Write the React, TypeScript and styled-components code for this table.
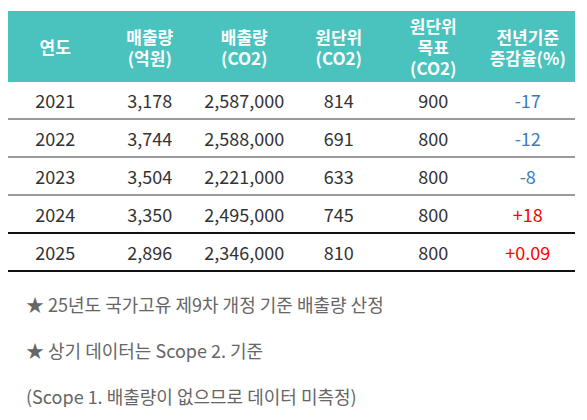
import React from 'react';
import styled, { createGlobalStyle } from 'styled-components';

const GlobalStyle = createGlobalStyle`
  body {
    margin: 0;
    background: #fff;
    font-family: 'Noto Sans CJK KR', 'Noto Sans', sans-serif;
  }
`;

const Wrapper = styled.main`
  padding: 11px 12px 0 8px;
`;

const Table = styled.table`
  width: 567px;
  border-collapse: collapse;
  table-layout: fixed;
  thead th {
    background: #4ac2bd;
    color: #fff;
    font-size: 17px;
    font-weight: 700;
    line-height: 21px;
    height: 71px;
    padding: 0;
    text-align: center;
    vertical-align: middle;
  }
  tbody td {
    height: 36px;
    padding: 0;
    font-size: 18px;
    color: #333;
    text-align: center;
    border-bottom: 2px solid #9a9a9a;
  }
  tbody tr:nth-child(n + 4) td {
    border-bottom-color: #111;
  }
`;

const Rate = styled.td<{ $up: boolean }>`
  && {
    color: ${(p) => (p.$up ? '#ff0000' : '#3a7dc0')};
  }
`;

const Notes = styled.ul`
  list-style: none;
  margin: 21px 0 0;
  padding-left: 18px;
  li {
    font-size: 18px;
    color: #666;
    line-height: 22px;
  }
  li + li {
    margin-top: 24px;
  }
`;

const rows = [
  ['2021', '3,178', '2,587,000', '814', '900', '-17'],
  ['2022', '3,744', '2,588,000', '691', '800', '-12'],
  ['2023', '3,504', '2,221,000', '633', '800', '-8'],
  ['2024', '3,350', '2,495,000', '745', '800', '+18'],
  ['2025', '2,896', '2,346,000', '810', '800', '+0.09'],
];

export default function App(): JSX.Element {
  return (
    <Wrapper>
      <GlobalStyle />
      <Table>
        <thead>
          <tr>
            <th>연도</th>
            <th>
              매출량
              <br />
              (억원)
            </th>
            <th>
              배출량
              <br />
              (CO2)
            </th>
            <th>
              원단위
              <br />
              (CO2)
            </th>
            <th>
              원단위
              <br />
              목표
              <br />
              (CO2)
            </th>
            <th>
              전년기준
              <br />
              증감율(%)
            </th>
          </tr>
        </thead>
        <tbody>
          {rows.map((r) => (
            <tr key={r[0]}>
              {r.slice(0, 5).map((c, i) => (
                <td key={i}>{c}</td>
              ))}
              <Rate $up={r[5].startsWith('+')}>{r[5]}</Rate>
            </tr>
          ))}
        </tbody>
      </Table>
      <Notes>
        <li>★ 25년도 국가고유 제9차 개정 기준 배출량 산정</li>
        <li>★ 상기 데이터는 Scope 2. 기준</li>
        <li>(Scope 1. 배출량이 없으므로 데이터 미측정)</li>
      </Notes>
    </Wrapper>
  );
}
